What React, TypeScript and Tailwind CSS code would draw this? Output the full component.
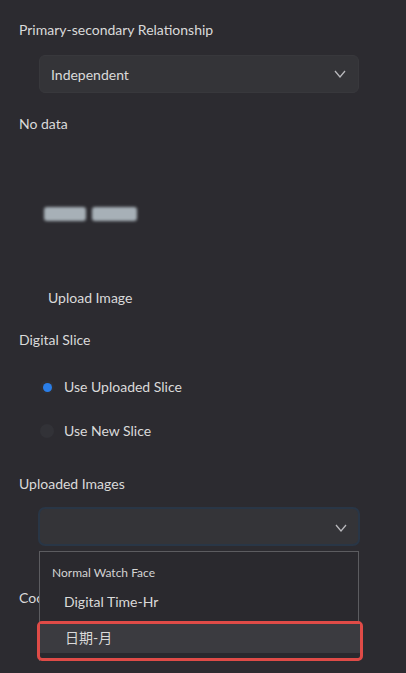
import React from "react";

const Chevron = () => (
  <svg width="12" height="8" viewBox="0 0 12 8" fill="none">
    <polyline points="1,1 6,7 11,1" stroke="#b8b8bc" strokeWidth="1.3" fill="none" />
  </svg>
);

export default function App() {
  return (
    <div
      className="relative w-[406px] h-[673px] overflow-hidden bg-[#2c2b30] text-[#dadada] text-[14px]"
      style={{ fontFamily: 'Lato, "Noto Sans CJK SC", sans-serif' }}
    >
      <div className="flex flex-col pl-[19px] pt-[20px]">
        <div className="h-[20px] leading-[20px]">Primary-secondary Relationship</div>
        <div className="mt-[15px] ml-[20px] w-[320px] h-[38px] rounded-[6px] bg-[#343438] border border-[#38383c] flex items-center justify-between pl-[11px] pr-[12px]">
          <span>Independent</span>
          <Chevron />
        </div>
        <div className="mt-[21px] h-[20px] leading-[20px]">No data</div>
        <div className="mt-[73px] ml-[25px] flex gap-[6px] h-[15px]">
          <div className="w-[42px] h-[14px] rounded-[3px] bg-[#a7b0b7] blur-[1.5px]" />
          <div className="w-[45px] h-[14px] rounded-[3px] bg-[#a7b0b7] blur-[1.5px]" />
        </div>
        <div className="mt-[66px] ml-[29px] h-[20px] leading-[20px]">Upload Image</div>
        <div className="mt-[22px] h-[20px] leading-[20px]">Digital Slice</div>
        <div className="mt-[27px] ml-[21px] flex items-center gap-[10px] h-[20px]">
          <div className="w-[14px] h-[14px] rounded-full bg-[#2f2f34] flex items-center justify-center">
            <div className="w-[9px] h-[9px] rounded-full bg-[#2a7ee8]" />
          </div>
          <span className="leading-[20px]">Use Uploaded Slice</span>
        </div>
        <div className="mt-[24px] ml-[21px] flex items-center gap-[10px] h-[20px]">
          <div className="w-[14px] h-[14px] rounded-full bg-[#323237]" />
          <span className="leading-[20px]">Use New Slice</span>
        </div>
        <div className="mt-[33px] h-[20px] leading-[20px]">Uploaded Images</div>
        <div className="mt-[13px] ml-[19px] w-[322px] h-[39px] rounded-[7px] bg-[#343438] border-2 border-[#293646] flex items-center justify-end pr-[11px]">
          <div className="mt-[2px]">
            <Chevron />
          </div>
        </div>
        <div className="mt-[42px] h-[20px] w-[20px] overflow-hidden whitespace-nowrap leading-[20px]">Coo</div>
      </div>

      <div className="absolute left-[39px] top-[551px] w-[320px] h-[110px] bg-[#2a292e] border border-[#5c5c60] border-b-0">
        <div className="pt-[13px] pl-[12px] text-[12px] leading-[16px] text-[#d4d4d4]">Normal Watch Face</div>
        <div className="mt-[11px] pl-[24px] h-[20px] leading-[20px]">Digital Time-Hr</div>
      </div>
      <div className="absolute left-[37px] top-[621px] w-[326px] h-[40px] rounded-[5px] border-[3px] border-[#df4b47] bg-[#2a292e] flex flex-col">
        <div className="h-[29px] bg-[#3b3b40] pl-[25px] pt-[3px]">
          <span className="leading-[20px]">日期-月</span>
        </div>
      </div>
    </div>
  );
}
